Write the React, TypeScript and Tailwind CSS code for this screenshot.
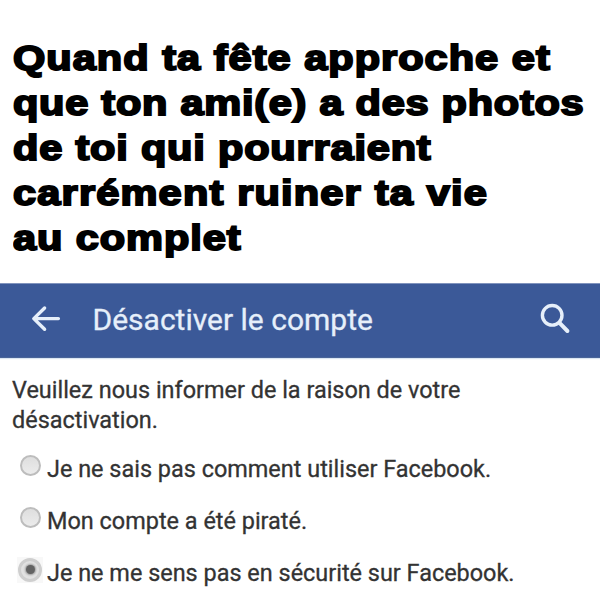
const headline = [
  { text: "Quand ta fête approche et", tracking: "tracking-[0.88px]" },
  { text: "que ton ami(e) a des photos", tracking: "tracking-[0.64px]" },
  { text: "de toi qui pourraient", tracking: "tracking-[0.7px]" },
  { text: "carrément ruiner ta vie", tracking: "tracking-[1.02px]" },
  { text: "au complet", tracking: "tracking-[0.8px]" },
];

const reasons = [
  { label: "Je ne sais pas comment utiliser Facebook.", checked: false },
  { label: "Mon compte a été piraté.", checked: false },
  { label: "Je ne me sens pas en sécurité sur Facebook.", checked: true },
];

function Radio({ checked }: { checked: boolean }) {
  if (checked) {
    return (
      <span className="-mt-[9px] flex size-[26px] shrink-0 items-center justify-center bg-[#f8f8f8]">
        <span className="flex size-6 items-center justify-center rounded-full border-[3px] border-[#cfcfcf] bg-[#e2e2e2]">
          <span className="size-[9px] rounded-full bg-[#636363] shadow-[0_0_2px_1px_#9a9a9a]" />
        </span>
      </span>
    );
  }
  return (
    <span className="-mt-[9px] flex size-[26px] shrink-0 items-center justify-center">
      <span className="size-[21px] rounded-full border-2 border-[#bdbdbd] bg-linear-to-b from-[#dedede] to-[#ececec]" />
    </span>
  );
}

export default function App() {
  return (
    <div className="h-[600px] w-[600px] overflow-hidden bg-white">
      <h1 className="h-[283px] pt-[35.6px] pl-[12.5px] font-['Liberation_Sans',Arial,sans-serif] text-[35.8px] leading-[45px] font-bold text-black [-webkit-text-stroke:2px_black]">
        {headline.map((line) => (
          <span key={line.text} className={`block origin-left scale-x-[1.16] whitespace-nowrap ${line.tracking}`}>
            {line.text}
          </span>
        ))}
      </h1>
      <header className="flex h-[75px] items-center border-t border-b border-t-[#8093bd] border-b-[#4a6599] bg-[#3b5998] pr-7 pl-[31px] text-[#e6effa] shadow-[0_1px_1px_#dbe6f3]">
        <svg className="-mt-[3px]" width="30" height="28" viewBox="0 0 30 28" fill="none" stroke="currentColor" strokeWidth="3.4" strokeLinecap="round" strokeLinejoin="round">
          <path d="M13.6 3 2.8 13.6 13.6 24.2M3.2 13.6h24.2" />
        </svg>
        <span className="-mt-0.5 ml-[31.5px] flex-1 font-['Roboto',sans-serif] text-[30px] leading-9 whitespace-nowrap [-webkit-text-stroke:0.3px_currentColor]">
          Désactiver le compte
        </span>
        <svg className="-mt-[3px]" width="32" height="32" viewBox="0 0 32 32" fill="none" stroke="currentColor" strokeLinecap="round">
          <circle cx="12.2" cy="12.3" r="9.8" strokeWidth="3.4" />
          <path d="m20 20.4 7.4 7.6" strokeWidth="4" />
        </svg>
      </header>
      <main className="pt-[17px] pl-3 font-['Roboto',sans-serif] text-[23.44px] text-[#333] [-webkit-text-stroke:0.3px_currentColor]">
        <p className="leading-[30px]">
          Veuillez nous informer de la raison de votre
          <br />
          désactivation.
        </p>
        <div className="mt-[9px] pl-[5px]">
          {reasons.map((reason) => (
            <label key={reason.label} className="flex h-[52px] items-center gap-1 whitespace-nowrap">
              <Radio checked={reason.checked} />
              {reason.label}
            </label>
          ))}
        </div>
      </main>
    </div>
  );
}
